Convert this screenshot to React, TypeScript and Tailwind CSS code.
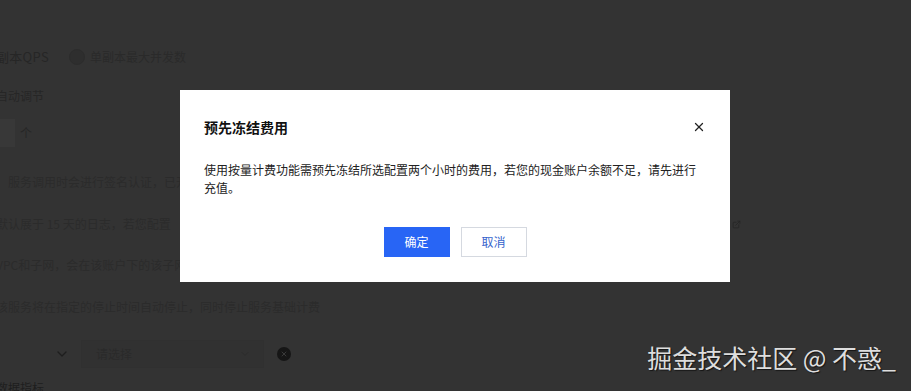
import { X, ChevronDown, ExternalLink } from "lucide-react";

const cjk = "font-['Noto_Sans_CJK_SC','Noto_Sans',sans-serif]";

const BackdropPage = () => {
  return (
    <div className={`flex flex-col pt-[47px] -ml-[4px] text-[12px] text-[#262626] ${cjk}`}>
      <div className="h-5 flex items-center whitespace-nowrap">
        <span className="text-[13px] tracking-[0.3px]">副本QPS</span>
        <span className="w-4 h-4 rounded-full bg-[#2e2e2e] border border-[#2c2c2c] ml-[20px]" />
        <span className="ml-[5px] text-[#2a2a2a]">单副本最大并发数</span>
      </div>
      <div className="h-5 mt-[19px] flex items-center whitespace-nowrap">
        <span>自动调节</span>
      </div>
      <div className="h-5 mt-[17px] flex items-center gap-[5px] whitespace-nowrap">
        <span className="w-[19px] h-[28px] bg-[#383838]" />
        <span>个</span>
      </div>
      <div className="h-5 mt-[29px] flex items-center whitespace-nowrap text-[#2b2b2b] pl-3">
        <span className="w-[172px] overflow-hidden">服务调用时会进行签名认证，已开启</span>
      </div>
      <div className="h-5 mt-[22px] flex items-center whitespace-nowrap w-[745px] text-[#2b2b2b]">
        <span className="w-[184px] overflow-hidden">默认展于 15 天的日志，若您配置</span>
        <ExternalLink className="ml-auto w-[9px] h-[9px] text-[#242424]" strokeWidth={2} />
      </div>
      <div className="h-5 mt-[21px] flex items-center whitespace-nowrap text-[#2b2b2b]">
        <span className="w-[184px] overflow-hidden">VPC和子网，会在该账户下的该子网</span>
      </div>
      <div className="h-5 mt-[22px] flex items-center whitespace-nowrap text-[#2b2b2b]">
        <span>该服务将在指定的停止时间自动停止，同时停止服务基础计费</span>
      </div>
      <div className="h-[28px] mt-[23px] flex items-center whitespace-nowrap">
        <ChevronDown className="w-4 h-4 text-[#1e1e1e] ml-[58px]" strokeWidth={2} />
        <div className="ml-[11px] w-[183px] h-[28px] border border-[#303030] bg-[#313131] flex items-center pl-[14px] pr-[12px] text-[#2a2a2a]">
          <span>请选择</span>
          <ChevronDown className="ml-auto w-3 h-3 text-[#2b2b2b]" />
        </div>
        <span className="ml-[13px] w-[14px] h-[14px] rounded-full bg-[#161616] flex items-center justify-center">
          <X className="w-2 h-2 text-[#3a3a3a]" strokeWidth={3} />
        </span>
      </div>
      <div className="h-5 mt-[10px] flex items-center whitespace-nowrap text-[#1e1e1e]">
        <span>数据指标</span>
      </div>
    </div>
  );
};

const FreezeDialog = () => {
  return (
    <div className={`absolute left-[180px] top-[90px] w-[550px] h-[192px] bg-white px-6 pt-[27px] pb-[25px] ${cjk}`}>
      <div className="flex items-center h-5">
        <h3 className="text-[14px] font-bold text-[#111]">预先冻结费用</h3>
        <button className="ml-auto text-[#222]">
          <X className="w-[14px] h-[14px]" strokeWidth={2.2} />
        </button>
      </div>
      <p className="mt-6 text-[12px] leading-[18px] text-[#222]">
        使用按量计费功能需预先冻结所选配置两个小时的费用，若您的现金账户余额不足，请先进行充值。
      </p>
      <div className="mt-[30px] flex justify-center gap-[11px]">
        <button className="w-[66px] h-[30px] bg-[#2865f5] text-white text-[12px]">确定</button>
        <button className="w-[66px] h-[30px] bg-white border border-[#d5d9e0] text-[#3563cc] text-[12px]">
          取消
        </button>
      </div>
    </div>
  );
};

export default function App() {
  return (
    <div className="relative w-full h-[391px] bg-[#333333] overflow-hidden">
      <BackdropPage />
      <FreezeDialog />
      <div
        className={`absolute right-[15px] top-[342px] text-[25px] leading-[30px] text-[#dedede] whitespace-nowrap [text-shadow:1px_1px_1px_rgba(0,0,0,0.6)] ${cjk}`}
      >
        掘金技术社区 @ 不惑_
      </div>
    </div>
  );
}
